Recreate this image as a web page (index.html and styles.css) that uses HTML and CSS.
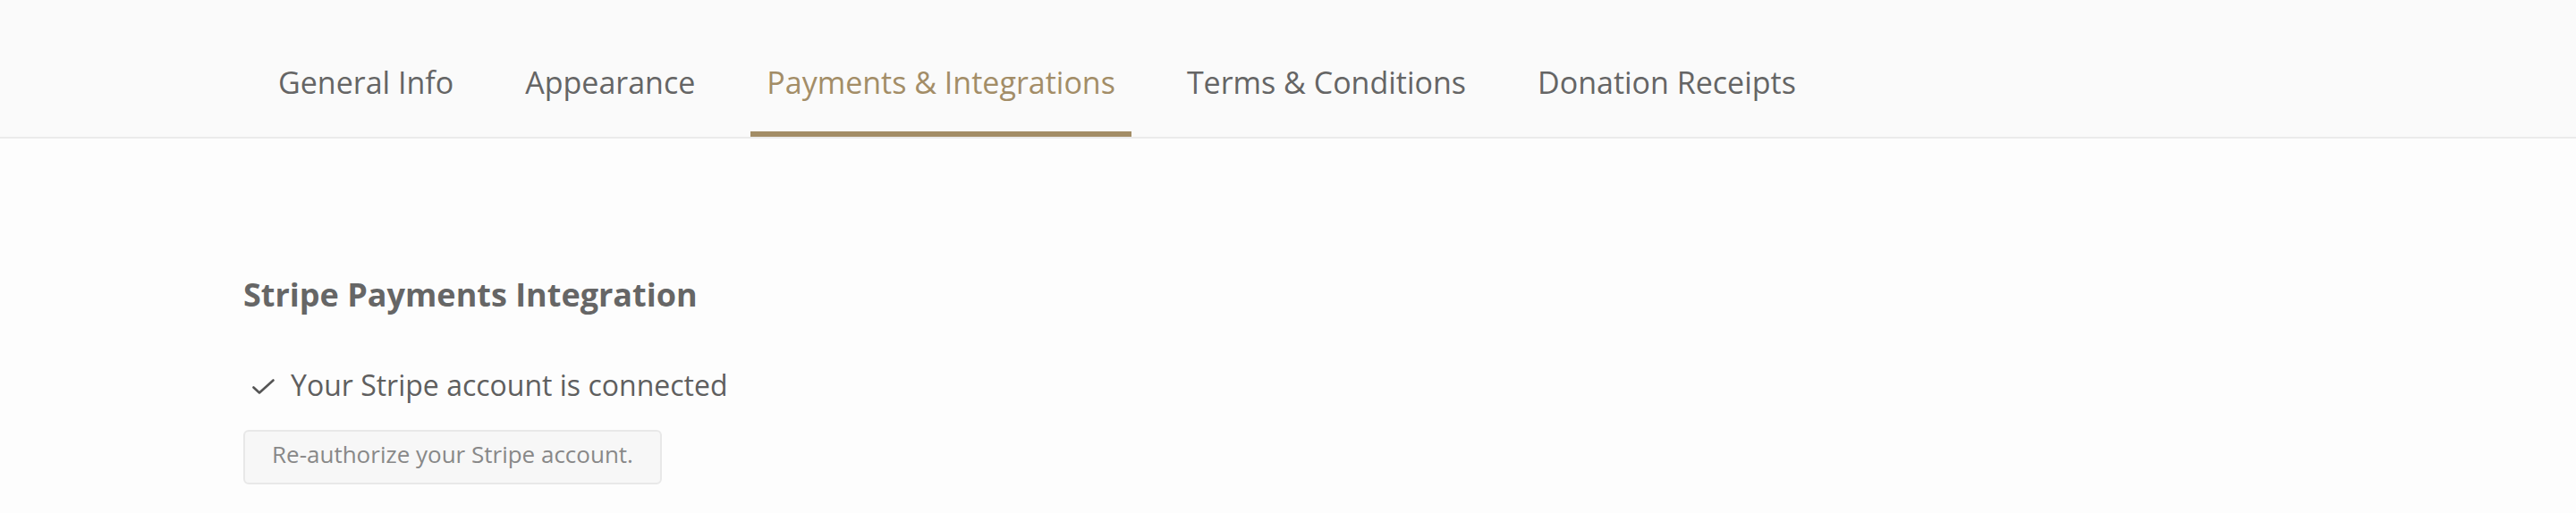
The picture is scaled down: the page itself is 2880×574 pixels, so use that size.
FILE: index.html
```html
<!DOCTYPE html>
<html lang="en">
<head>
<meta charset="utf-8">
<title>Payments &amp; Integrations</title>
<link rel="stylesheet" href="styles.css">
</head>
<body>
<header class="tabs-bar">
  <nav class="tabs container">
    <a class="tab" href="#">General Info</a>
    <a class="tab" href="#">Appearance</a>
    <a class="tab tab-active" href="#">Payments &amp; Integrations</a>
    <a class="tab" href="#">Terms &amp; Conditions</a>
    <a class="tab" href="#">Donation Receipts</a>
  </nav>
</header>
<main class="container content">
  <h2 class="section-title">Stripe Payments Integration</h2>
  <p class="status">
    <svg class="check" viewBox="0 0 26 18" width="26" height="18" aria-hidden="true">
      <path d="M1.5 9.5 L8 15.5 L23.5 1.5" fill="none" stroke="#555" stroke-width="2.6" stroke-linecap="round" stroke-linejoin="round"/>
    </svg>
    <span>Your Stripe account is connected</span>
  </p>
  <button class="btn-reauth" type="button">Re-authorize your Stripe account.</button>
</main>
</body>
</html>
```
FILE: styles.css
```css
* { box-sizing: border-box; }
html, body {
  margin: 0;
  padding: 0;
  background: #fdfdfd;
  font-family: "Open Sans", "Noto Sans", sans-serif;
  color: #666;
}
.container {
  max-width: 2336px;
  margin: 0 auto;
}
.tabs-bar {
  background: #fafafa;
  border-bottom: 2px solid #ebebeb;
}
.tabs {
  display: flex;
  gap: 44px;
  padding-left: 21px;
}
.tab {
  display: block;
  font-size: 34px;
  line-height: 46px;
  padding: 69px 18px 32px;
  border-bottom: 6px solid transparent;
  color: #656565;
  text-decoration: none;
}
.tab-active {
  color: #a38d67;
  border-bottom-color: #a38d66;
}
.content {
  padding-top: 150px;
}
.section-title {
  margin: 0;
  font-size: 36px;
  line-height: 49px;
  font-weight: 700;
  color: #666;
}
.status {
  display: flex;
  align-items: center;
  gap: 17px;
  margin: 55px 0 0;
  padding-left: 10px;
  font-size: 32px;
  line-height: 44px;
  color: #5f5f5f;
}
.check { flex: none; margin-top: 4px; }
.btn-reauth {
  display: block;
  margin-top: 28px;
  padding: 8px 30px 14px;
  font-family: "Open Sans", "Noto Sans", sans-serif;
  font-size: 26px;
  line-height: 35px;
  color: #888;
  background: #f7f7f7;
  border: 2px solid #e8e8e8;
  border-radius: 6px;
}
```
